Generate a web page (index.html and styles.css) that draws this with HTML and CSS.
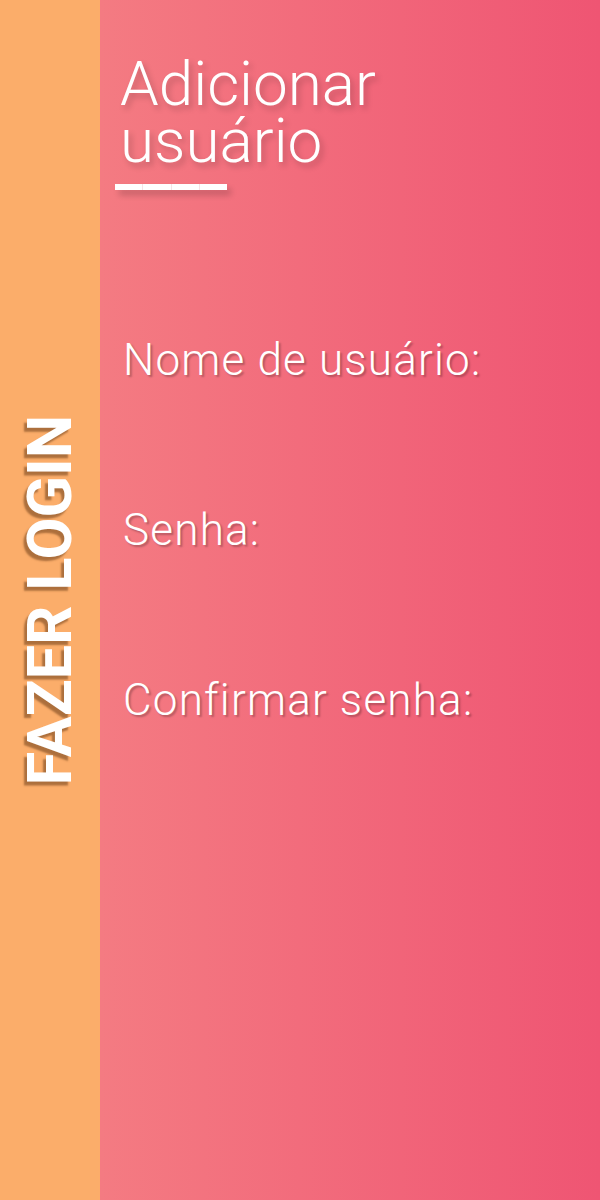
FILE: index.html
```html
<!DOCTYPE html>
<html lang="pt">
<head>
<meta charset="utf-8">
<title>Adicionar usuário</title>
<link rel="stylesheet" href="styles.css">
</head>
<body>
<div class="page">
  <aside class="side">
    <span class="side-label">FAZER LOGIN</span>
  </aside>
  <main class="main">
    <h1 class="title">Adicionar<br>usuário</h1>
    <div class="bar"><span></span><span></span><span></span><span></span></div>
    <form class="form">
      <label class="field">Nome de usuário:</label>
      <label class="field">Senha:</label>
      <label class="field">Confirmar senha:</label>
    </form>
  </main>
</div>
</body>
</html>
```

FILE: styles.css
```css
html, body {
  margin: 0;
  padding: 0;
  height: 100%;
}
body {
  font-family: Roboto, "Liberation Sans", sans-serif;
  color: #fff;
}
.page {
  display: flex;
  width: 600px;
  height: 1200px;
}
.side {
  width: 100px;
  flex-shrink: 0;
  background: #fbad6a;
  display: flex;
  align-items: center;
  justify-content: center;
}
.side-label {
  writing-mode: vertical-rl;
  transform: rotate(180deg);
  font-weight: 700;
  font-size: 61px;
  line-height: 1;
  white-space: nowrap;
  text-shadow: -4px -3px 2px rgba(120, 70, 30, 0.6);
}
.main {
  flex: 1;
  background: linear-gradient(90deg, #f47b82 0%, #ef5573 100%);
  padding: 55px 20px 0 20px;
}
.title {
  margin: 0;
  font-weight: 300;
  font-size: 62px;
  line-height: 57px;
  text-shadow: 3px 4px 6px rgba(0, 0, 0, 0.2);
}
.bar {
  display: flex;
  margin: 15px 0 0 -5px;
  width: 112px;
  height: 6px;
  box-shadow: 4px 5px 6px rgba(0, 0, 0, 0.2);
}
.bar span {
  flex: 1;
  background: #fff;
  border-left: 1px solid #f6e3e6;
}
.bar span:first-child {
  border-left: none;
}
.form {
  margin-top: 145px;
  display: flex;
  flex-direction: column;
  gap: 120px;
}
.field {
  display: block;
  font-weight: 300;
  font-size: 44px;
  line-height: 50px;
  letter-spacing: 1.2px;
  padding-left: 3px;
  text-shadow: 2px 2px 2px rgba(0, 0, 0, 0.25);
}
```
